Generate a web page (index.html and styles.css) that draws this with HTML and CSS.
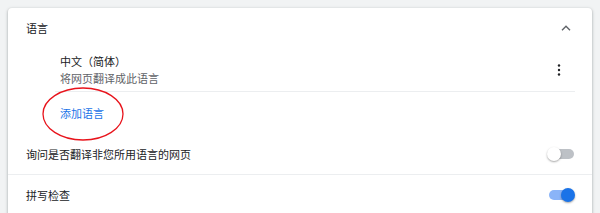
FILE: index.html
```html
<!DOCTYPE html>
<html lang="zh-CN">
<head>
    <meta charset="UTF-8">
    <meta name="viewport" content="width=device-width, initial-scale=1.0">
    <title>语言</title>
    <link rel="stylesheet" href="styles.css">
</head>
<body>
    <div class="card">
        <div class="section-head">
            <span>语言</span>
            <button class="icon-btn" aria-label="收起">
                <svg width="10" height="6" viewBox="0 0 10 6"><polyline points="1,5.2 5,1.3 9,5.2" fill="none" stroke="#5f6368" stroke-width="1.4"/></svg>
            </button>
        </div>

        <div class="lang-list">
            <div class="lang-item">
                <div class="lang-text">
                    <div class="lang-name">中文（简体）</div>
                    <div class="lang-sub">将网页翻译成此语言</div>
                </div>
                <button class="icon-btn more" aria-label="更多操作">
                    <svg width="4" height="14" viewBox="0 0 4 14"><circle cx="2" cy="2.5" r="1.2" fill="#202124"/><circle cx="2" cy="7" r="1.2" fill="#202124"/><circle cx="2" cy="11.5" r="1.2" fill="#202124"/></svg>
                </button>
            </div>
        </div>

        <div class="add-row">
            <a href="#" class="add-link">添加语言</a>
            <!-- 标注圈 -->
            <svg class="mark" width="84" height="56" viewBox="0 0 84 56"><ellipse cx="42" cy="28" rx="40" ry="26" fill="none" stroke="#e8141c" stroke-width="1.3"/></svg>
        </div>

        <div class="toggle-row bordered">
            <span>询问是否翻译非您所用语言的网页</span>
            <div class="toggle"><span class="track"></span><span class="knob"></span></div>
        </div>

        <div class="toggle-row">
            <span>拼写检查</span>
            <div class="toggle on"><span class="track"></span><span class="knob"></span></div>
        </div>
    </div>
</body>
</html>
```

FILE: styles.css
```css
body {
    margin: 0;
    padding: 8px 8px 0 8px;
    background: #f1f3f4;
    font-family: "Noto Sans CJK SC", "Noto Sans", sans-serif;
    font-size: 11px;
    color: #202124;
    overflow: hidden;
}

.card {
    background: #fff;
    border-radius: 4px 4px 0 0;
    box-shadow: 0 1px 2px rgba(60, 64, 67, 0.3), 0 1px 3px 1px rgba(60, 64, 67, 0.15);
    height: 220px;
}

.section-head {
    display: flex;
    align-items: center;
    justify-content: space-between;
    height: 40px;
    padding: 0 16px 0 18px;
}

.icon-btn {
    background: none;
    border: none;
    padding: 0;
    width: 20px;
    height: 20px;
    display: flex;
    align-items: center;
    justify-content: center;
    cursor: pointer;
}

/* 语言列表 */
.lang-list {
    margin: 0 17px 0 47px;
}
.lang-item {
    display: flex;
    align-items: center;
    justify-content: space-between;
    height: 43px;
    padding: 0 6px 0 5px;
    border-bottom: 1px solid #eceef0;
}
.lang-name {
    line-height: 17px;
}
.lang-sub {
    color: #5f6368;
    line-height: 17px;
}

.add-row {
    position: relative;
    display: flex;
    align-items: center;
    height: 42px;
    padding-left: 52px;
}
.add-link {
    color: #1a73e8;
    text-decoration: none;
}
.mark {
    position: absolute;
    left: 33px;
    top: -6px;
}

/* 开关行 */
.toggle-row {
    display: flex;
    align-items: center;
    justify-content: space-between;
    height: 40px;
    padding: 0 17px 0 18px;
}
.toggle-row.bordered {
    border-bottom: 1px solid #eceef0;
}

.toggle {
    position: relative;
    width: 28px;
    height: 14px;
}
.toggle .track {
    position: absolute;
    left: 2px;
    right: 1px;
    top: 2px;
    height: 10px;
    border-radius: 5px;
    background: #bdc1c6;
}
.toggle .knob {
    position: absolute;
    left: 0;
    top: 0;
    width: 14px;
    height: 14px;
    border-radius: 50%;
    background: #fff;
    box-shadow: 0 1px 2px rgba(0, 0, 0, 0.35);
}
.toggle.on .track {
    background: #8ab4f8;
}
.toggle.on .knob {
    left: auto;
    right: 0;
    background: #1a73e8;
}
```
